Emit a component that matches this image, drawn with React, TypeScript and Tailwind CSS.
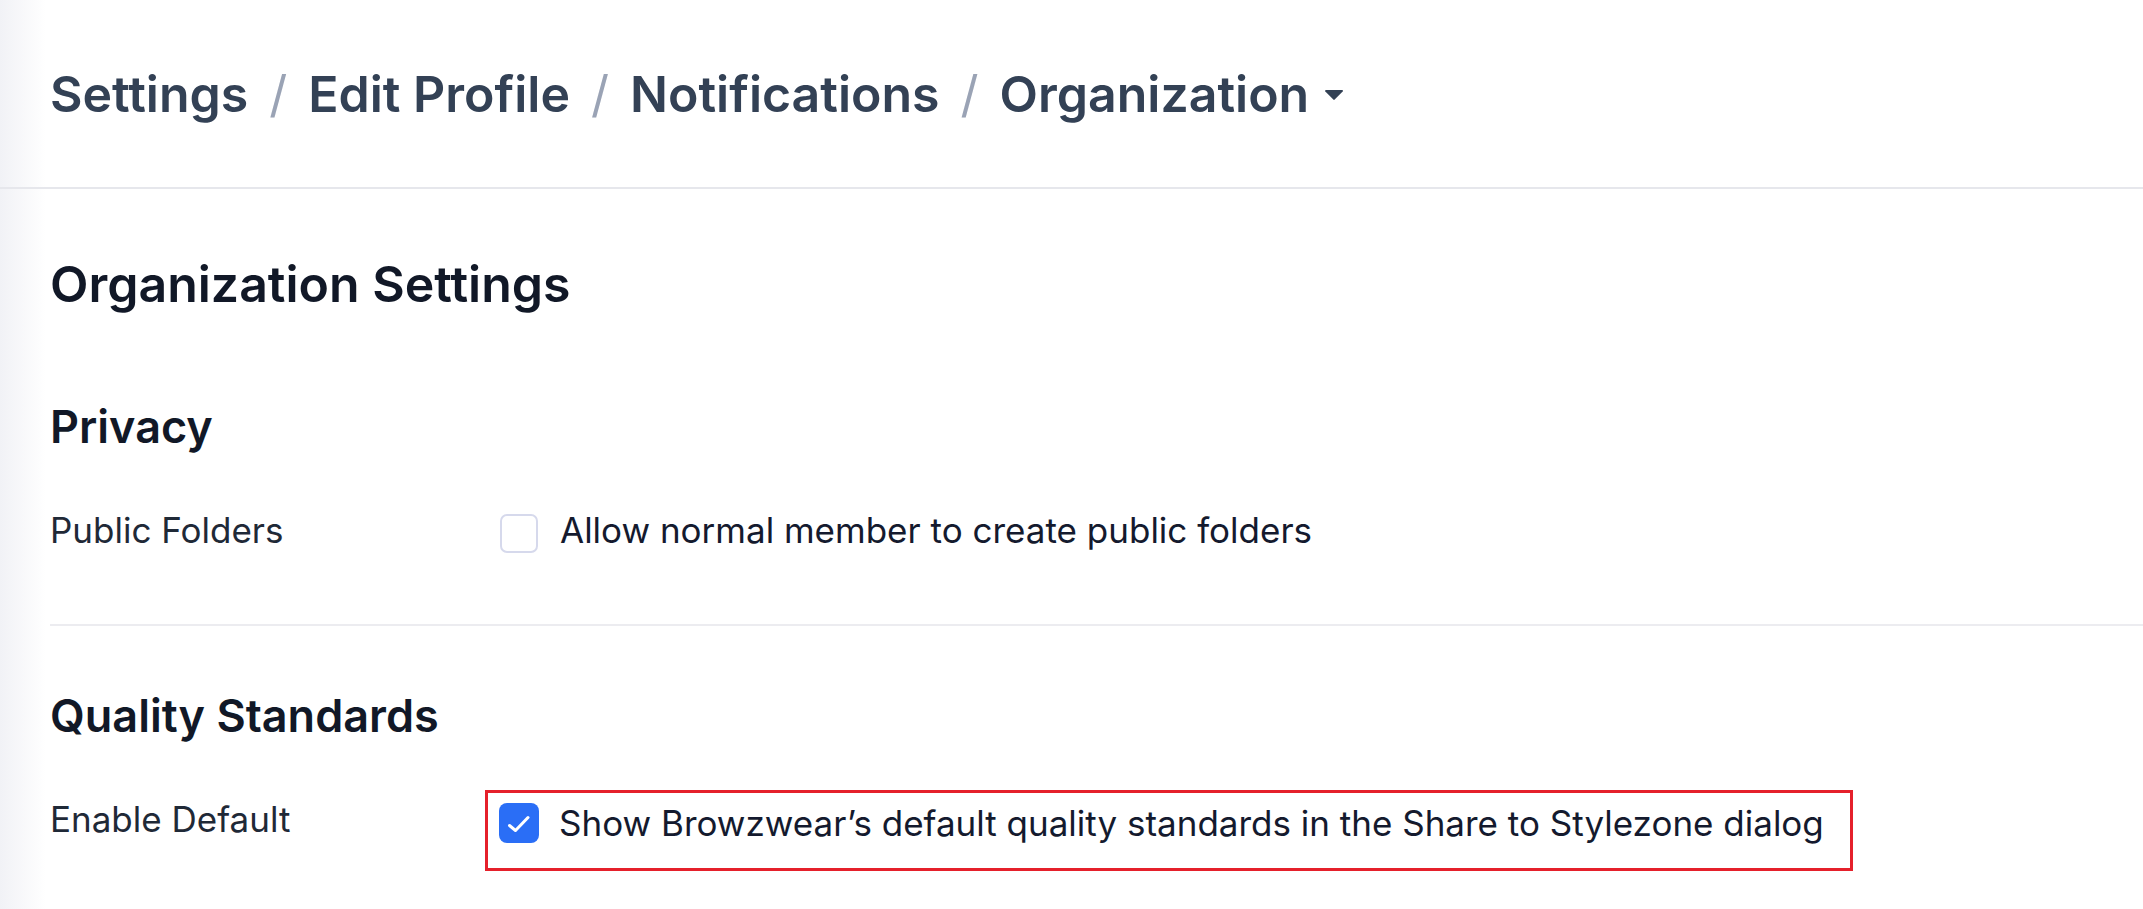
import React from 'react';

const crumbs = ['Settings', 'Edit Profile', 'Notifications', 'Organization'];

const Checkbox = ({ checked }: { checked?: boolean }) =>
    checked ? (
        <span className="flex h-[40px] w-[40px] shrink-0 items-center justify-center rounded-[8px] bg-[#2a6ef6]">
            <svg width="40" height="40" viewBox="0 0 40 40" fill="none">
                <path d="M10.5 22.5l6 5 12.5-13" stroke="#fff" strokeWidth="3" strokeLinecap="round" strokeLinejoin="round" />
            </svg>
        </span>
    ) : (
        <span className="block h-[39px] w-[38px] shrink-0 rounded-[7px] border-2 border-[#d6d9ec] bg-white" />
    );

const App = () => {
    return (
        <div className="min-h-screen bg-[linear-gradient(to_right,#f1f2f6,#ffffff_46px)] font-['Inter',sans-serif]">
            <div className="flex h-[189px] items-center border-b-2 border-[#e6e7ec] pl-[50px]">
                {crumbs.map((c, i) => (
                    <React.Fragment key={c}>
                        {i > 0 && (
                            <span className="mx-[21px] text-[50px] leading-[60px] text-[#9aa3b5]">/</span>
                        )}
                        <span className="text-[50px] font-semibold leading-[60px] text-[#334155]">{c}</span>
                    </React.Fragment>
                ))}
                <svg className="ml-[16px] mt-[2px]" width="18" height="10" viewBox="0 0 18 10">
                    <path d="M1 0h16c.8 0 1.2.9.7 1.5L9.7 9.6a1 1 0 0 1-1.4 0L.3 1.5C-.2.9.2 0 1 0z" fill="#334155" />
                </svg>
            </div>

            <div className="pl-[50px]">
                <h1 className="pt-[65px] text-[50px] font-semibold leading-[60px] text-[#111827]">
                    Organization Settings
                </h1>

                <h2 className="pt-[86px] text-[45px] font-semibold leading-[54px] text-[#111827]">Privacy</h2>
                <div className="flex items-start pt-[56px]">
                    <div className="w-[450px] text-[35px] leading-[40px] text-[#1f2937]">Public Folders</div>
                    <div className="mt-[4px]">
                        <Checkbox />
                    </div>
                    <span className="ml-[22px] text-[35px] leading-[40px] text-[#141a2e]">
                        Allow normal member to create public folders
                    </span>
                </div>

                <div className="mt-[71px] border-t-2 border-[#ececf0]" />

                <h2 className="pt-[63px] text-[45px] font-semibold leading-[54px] text-[#111827]">
                    Quality Standards
                </h2>
                <div className="flex items-start pt-[47px]">
                    <div className="w-[435px] pt-[9px] text-[35px] leading-[40px] text-[#1f2937]">Enable Default</div>
                    <div className="flex w-[1368px] items-center border-[3px] border-[#e5202b] pb-[25px] pl-[11px] pt-[10px]">
                        <Checkbox checked />
                        <span className="ml-[20px] text-[35px] leading-[40px] text-[#141a2e]">
                            Show Browzwear’s default quality standards in the Share to Stylezone dialog
                        </span>
                    </div>
                </div>
            </div>
        </div>
    );
};

export default App;
